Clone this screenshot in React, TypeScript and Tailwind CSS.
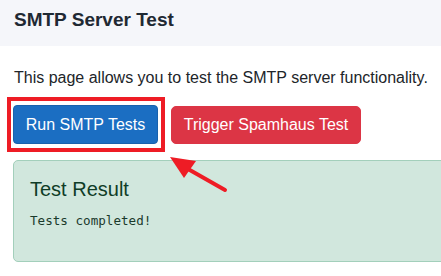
// SMTP server test page: header, intro text, action buttons, result panel
// plus the red annotation box + arrow from the screenshot

export default function App() {
  return (
    <div className="relative w-[441px] h-[276px] overflow-hidden bg-white font-['Liberation_Sans',Arial,sans-serif] text-[#212529]">
      {/* Top bar */}
      <div className="h-[46px] bg-[#f5f6fa] px-[14px] pt-[8px]">
        <h1 className="text-[19px] leading-[24px] font-bold text-[#1f2933]">SMTP Server Test</h1>
      </div>

      <div className="px-[13px] pt-[20px]">
        <p className="pl-px text-[16px] leading-[24px]">This page allows you to test the SMTP server functionality.</p>

        {/* Actions */}
        <div className="relative mt-[15px] flex gap-[13px]">
          <button className="h-[39px] w-[145px] rounded-[4px] border border-[#1861ac] bg-[#1b6ec2] text-[16px] text-white">
            Run SMTP Tests
          </button>
          <button className="mt-px h-[38px] w-[190px] rounded-[5px] border border-[#dc3545] bg-[#dc3545] text-[16px] text-white">
            Trigger Spamhaus Test
          </button>
          {/* annotation frame */}
          <div className="pointer-events-none absolute left-[-6px] top-[-8px] h-[55px] w-[158px] border-4 border-[#ee1c25]" />
        </div>

        {/* Result panel */}
        <div className="mt-[16px] h-[102px] w-[460px] rounded-[5px] border border-[#a3cfbb] bg-[#d1e7dd] px-[16px] pt-[16px] text-[#0f3d27]">
          <h4 className="text-[20px] leading-[24px]">Test Result</h4>
          <pre className="mt-[11px] font-['DejaVu_Sans_Mono',monospace] text-[12.6px] leading-[18px] text-[#1a3a2c]">Tests completed!</pre>
        </div>
      </div>

      {/* annotation arrow */}
      <svg className="pointer-events-none absolute left-0 top-0" width="441" height="276" viewBox="0 0 441 276">
        <line x1="188" y1="169" x2="225" y2="190" stroke="#ee1c25" strokeWidth="4" strokeLinecap="round" />
        <polygon points="170,157 196,161 184,178" fill="#ee1c25" />
      </svg>
    </div>
  )
}
